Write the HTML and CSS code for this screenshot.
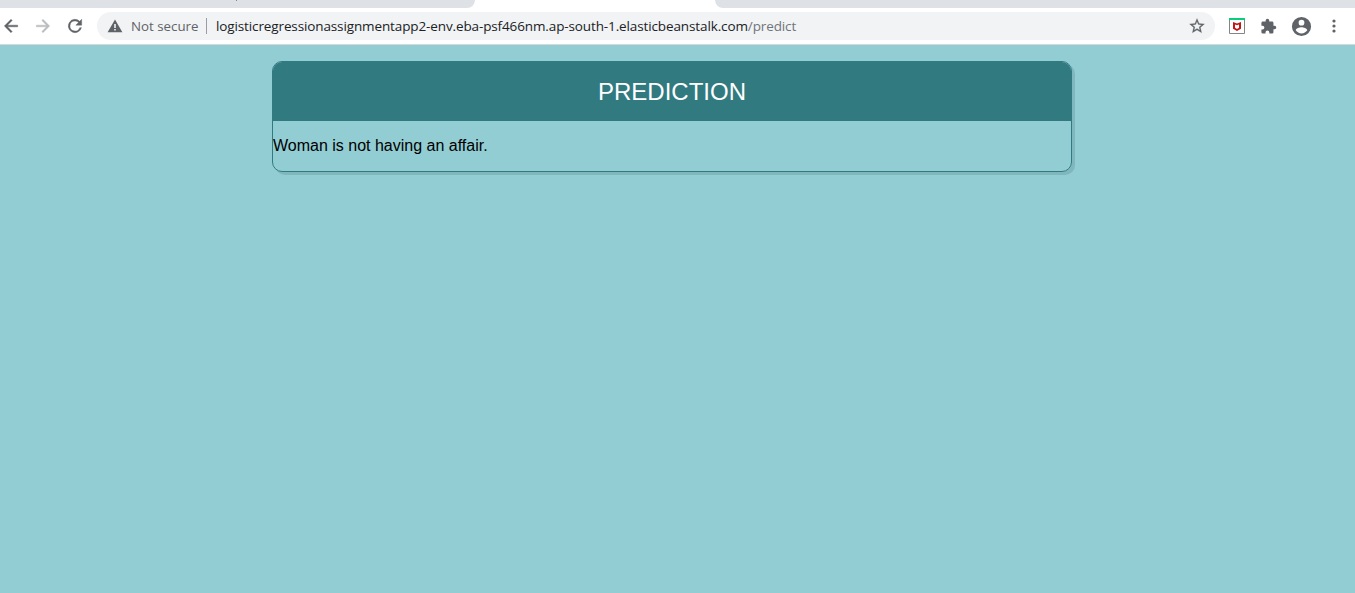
FILE: index.html
```
<!DOCTYPE html>
<html lang="en">
<head>
<meta charset="utf-8">
<title>Prediction</title>
<link rel="stylesheet" href="styles.css">
</head>
<body>
<div class="tabstrip">
  <div class="tabs-left"><span class="tab-divider"></span></div>
  <div class="tab-active"></div>
  <div class="tabs-right"></div>
</div>
<div class="toolbar">
  <svg class="icon back" viewBox="0 0 24 24"><path d="M20 11H7.8l5.6-5.6L12 4l-8 8 8 8 1.4-1.4L7.8 13H20z"/></svg>
  <svg class="icon forward" viewBox="0 0 24 24"><path d="M12 4l-1.4 1.4 5.6 5.6H4v2h12.2l-5.6 5.6L12 20l8-8z"/></svg>
  <svg class="icon reload" viewBox="0 0 24 24"><path d="M17.65 6.35A8 8 0 1 0 19.73 14h-2.08A6 6 0 1 1 12 6c1.66 0 3.14.69 4.22 1.78L13 11h7V4z"/></svg>
  <div class="omnibox">
    <svg class="warning" viewBox="0 0 16 14"><path fill-rule="evenodd" d="M8 0.5 15.4 13.2H.6zM7.2 5v4h1.6V5zm0 5v1.6h1.6V10z"/></svg>
    <span class="security">Not secure</span>
    <span class="divider"></span>
    <span class="url">logisticregressionassignmentapp2-env.eba-psf466nm.ap-south-1.elasticbeanstalk.com<span class="path">/predict</span></span>
    <svg class="star" viewBox="0 0 24 24"><path d="M22 9.24l-7.19-.62L12 2 9.19 8.63 2 9.24l5.46 4.73L5.82 21 12 17.27 18.18 21l-1.63-7.03zM12 15.4l-3.76 2.27 1-4.28-3.32-2.88 4.38-.38L12 6.1l1.71 4.04 4.38.38-3.32 2.88 1 4.28z"/></svg>
  </div>
  <svg class="shield" viewBox="0 0 16 16"><path fill="#fff" stroke="#858585" d="M.5.5h15v15H.5z"/><path fill="#06d07a" d="M0 0h16v2H0z"/><path fill="#c01818" fill-rule="evenodd" d="M4 4l4 1.500L12 4v6.700L8 13l-4-2.300zM6 6.500v3.200l2 1.200 2-1.200V6.500L8 7.300z"/></svg>
  <svg class="puzzle" viewBox="0 0 24 24"><path d="M20.5 11H19V7a2 2 0 0 0-2-2h-4V3.500a2.500 2.500 0 0 0-5 0V5H4a2 2 0 0 0-2 2v3.800h1.500a2.700 2.700 0 0 1 0 5.400H2V20a2 2 0 0 0 2 2h3.800v-1.500a2.700 2.700 0 0 1 5.400 0V22H17a2 2 0 0 0 2-2v-4h1.500a2.500 2.500 0 0 0 0-5z"/></svg>
  <svg class="avatar" viewBox="0 0 24 24"><path d="M12 2a10 10 0 1 0 0 20 10 10 0 0 0 0-20zm0 3a3 3 0 1 1 0 6 3 3 0 0 1 0-6zm0 14.200A7.200 7.200 0 0 1 6 15.980c.030-1.990 4-3.080 6-3.080s5.970 1.090 6 3.080a7.200 7.200 0 0 1-6 3.220z"/></svg>
  <svg class="menu" viewBox="0 0 4 14"><circle cx="2" cy="2" r="1.600"/><circle cx="2" cy="7" r="1.600"/><circle cx="2" cy="12" r="1.600"/></svg>
</div>
<main class="page">
  <section class="card">
    <h1 class="card-header">PREDICTION</h1>
    <p class="result">Woman is not having an affair.</p>
  </section>
</main>
</body>
</html>
```
FILE: styles.css
```
* { box-sizing: border-box; }
body {
  margin: 0;
  height: 593px;
  overflow: hidden;
  display: flex;
  flex-direction: column;
  background: #91cdd3;
  font-family: "Liberation Sans", Arial, sans-serif;
}
svg { display: block; flex: none; fill: #5f6368; }
.tabstrip { display: flex; height: 8px; flex: none; background: #fff; }
.tabs-left { width: 475px; background: #dee1e6; border-bottom-right-radius: 8px; }
.tab-divider { display: block; width: 1px; height: 1px; margin-left: 236px; background: #85888d; }
.tab-active { width: 240px; background: #fff; }
.tabs-right { flex: 1; background: #dee1e6; border-bottom-left-radius: 8px; }
.toolbar {
  display: flex;
  align-items: center;
  flex: none;
  height: 37px;
  background: #fff;
  border-bottom: 1px solid #d5d7d9;
}
.icon { width: 20px; height: 20px; stroke: #5f6368; stroke-width: 0.5px; }
.back { margin-left: 1px; }
.forward { margin-left: 12px; fill: #babcbe; stroke: #babcbe; }
.reload { margin-left: 12px; }
.omnibox {
  display: flex;
  align-items: center;
  width: 1118px;
  height: 28px;
  margin-left: 12px;
  border-radius: 14px;
  background: #f1f3f4;
  font: 14px/28px "Open Sans", "Noto Sans", sans-serif;
  white-space: nowrap;
}
.warning { width: 16px; height: 14px; margin-left: 10px; }
.security { width: 67px; margin-left: 8px; color: #5f6368; font-size: 13.3px; }
.divider { width: 1px; height: 16px; margin-left: 8px; background: #9a9da1; }
.url { width: 581px; margin-left: 9px; color: #202124; font-size: 13.5px; letter-spacing: -0.12px; }
.path { color: #70757a; }
.star { width: 18px; height: 18px; margin-left: auto; margin-right: 9px; stroke: #5f6368; stroke-width: 0.3px; }
.shield { width: 16px; height: 16px; margin-left: 14px; }
.puzzle { width: 17px; height: 17px; margin-left: 15px; }
.avatar { width: 23px; height: 23px; margin-left: 13px; }
.menu { width: 4px; height: 14px; margin-left: 19px; }
.page { flex: 1; padding: 16px 0 0 272px; }
.card {
  width: 800px;
  height: 111px;
  overflow: hidden;
  border: 1px solid #317a80;
  border-radius: 10px;
  box-shadow: 3px 3px 0 #80b7bd;
}
.card-header {
  height: 59px;
  margin: 0;
  background: #317a80;
  color: #fff;
  font-size: 24px;
  font-weight: 400;
  line-height: 59px;
  text-align: center;
}
.result { margin: 16px 0 0; font-size: 16px; line-height: 18px; color: #000; }
```
